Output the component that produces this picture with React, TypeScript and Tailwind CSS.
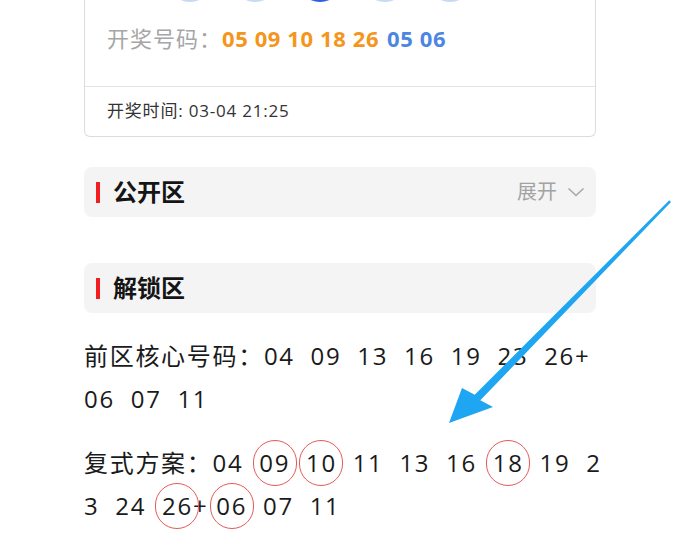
import React from "react";

const FONT = { fontFamily: '"Open Sans","Noto Sans CJK SC",sans-serif' };

function Circled({ children }: { children: React.ReactNode }) {
  return (
    <span className="relative">
      {children}
      <span className="absolute left-1/2 top-1/2 -translate-x-1/2 -translate-y-1/2 w-[44px] h-[46px] rounded-full border-[1.5px] border-[#e45a5a]" />
    </span>
  );
}

function SectionBar({ title, right }: { title: string; right?: boolean }) {
  return (
    <div className="flex items-center h-[50px] bg-[#f4f4f4] rounded-lg pl-[12px] pr-[11px]">
      <div className="w-[4px] h-[21px] bg-[#f01e1e]" />
      <div className="ml-[13px] text-[24px] font-bold text-[#151515] leading-none">{title}</div>
      {right && (
        <div className="ml-auto flex items-center text-[20px] text-[#a3a3a3]">
          <span>展开</span>
          <svg width="18" height="12" viewBox="0 0 18 12" className="ml-[10px]">
            <path d="M1.5 2.5 L9 9.5 L16.5 2.5" fill="none" stroke="#a8a8a8" strokeWidth="1.6" />
          </svg>
        </div>
      )}
    </div>
  );
}

export default function App() {
  const balls = ["light", "light", "dark", "light", "light"];
  return (
    <div className="relative w-[690px] h-[555px] overflow-hidden bg-white" style={FONT}>
      <div className="ml-[84px] w-[512px] flex flex-col">
        <div className="flex flex-col border border-t-0 border-[#dcdcdc] rounded-b-md">
          <div className="flex gap-[19px] -mt-[44px] ml-[82px]">
            {balls.map((b, i) => (
              <div
                key={i}
                className={
                  b === "dark"
                    ? "w-[46px] h-[46px] rounded-full bg-[#2c5fe6]"
                    : "w-[46px] h-[46px] rounded-full bg-[#eef3fc] border-2 border-[#c9d9f4]"
                }
              />
            ))}
          </div>
          <div className="pl-[22px] pt-[21px] pb-[33px] text-[22px] leading-[30px] flex items-center">
            <span className="text-[#a6a6a6] tracking-[1px]">开奖号码：</span>
            <span className="font-bold text-[#f5951c] tracking-[0.6px]">05 09 10 18 26</span>
            <span className="font-bold text-[#4d86e0] tracking-[0.6px] ml-[8px]">05 06</span>
          </div>
          <div className="border-t border-[#e3e3e3] pl-[22px] pt-[12px] pb-[13px] text-[17px] leading-[24px] tracking-[0.8px] text-[#333]">
            开奖时间: 03-04 21:25
          </div>
        </div>

        <div className="mt-[30px]">
          <SectionBar title="公开区" right />
        </div>
        <div className="mt-[46px]">
          <SectionBar title="解锁区" />
        </div>

        <div className="mt-[21px] w-[520px] text-[24px] leading-[43px] tracking-[1.7px] text-[#1a1a1a] whitespace-pre-wrap break-all">
          {"前区核心号码：04  09  13  16  19  23  26+  06  07  11"}
        </div>
        <div className="mt-[21px] w-[520px] text-[24px] leading-[43px] tracking-[1.7px] text-[#1a1a1a] whitespace-pre-wrap break-all">
          {"复式方案：04  "}
          <Circled>09</Circled>
          {"  "}
          <Circled>10</Circled>
          {"  11  13  16  "}
          <Circled>18</Circled>
          {"  19  23  24  "}
          <Circled>26</Circled>
          {"+ "}
          <Circled>06</Circled>
          {"  07  11"}
        </div>
      </div>

      <svg className="absolute left-0 top-0 pointer-events-none" width="690" height="555" viewBox="0 0 690 555">
        <polygon
          points="669.3,200.3 671,202 480.3,400.3 493,407 449,423 462,388 474.7,394.7"
          fill="#1ea6f2"
        />
      </svg>
    </div>
  );
}
